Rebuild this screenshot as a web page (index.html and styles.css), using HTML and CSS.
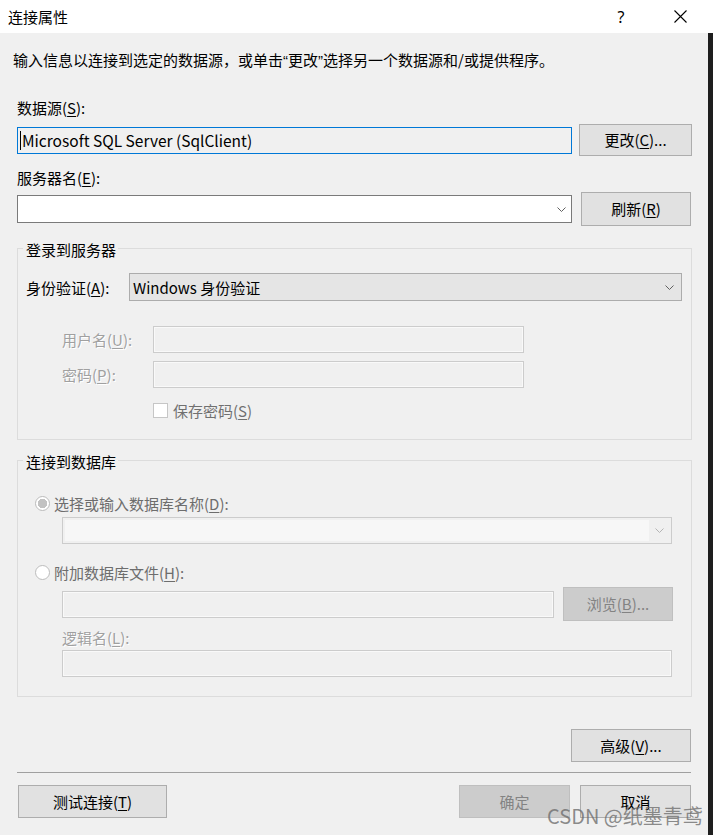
FILE: index.html
```html
<!DOCTYPE html>
<html lang="zh-CN">
<head>
    <meta charset="UTF-8">
    <title>连接属性</title>
    <link rel="stylesheet" href="styles.css">
</head>
<body>
<div class="titlebar">
    <span class="title">连接属性</span>
    <span class="help">?</span>
    <span class="close">
        <svg width="13" height="13" viewBox="0 0 13 13"><path d="M0.5 0.5 L12.5 12.5 M12.5 0.5 L0.5 12.5" stroke="#000" stroke-width="1.1" fill="none"/></svg>
    </span>
</div>
<div class="frame">
    <div class="content">
        <p class="intro">输入信息以连接到选定的数据源，或单击<span class="quote">“</span>更改<span class="quote">”</span>选择另一个数据源和/或提供程序。</p>

        <div class="label label-source">数据源(<u>S</u>):</div>
        <div class="row row-source">
            <div class="textbox focused"><span class="caret"></span><span class="latin">Microsoft SQL Server (SqlClient)</span></div>
            <button class="btn btn-change">更改(<u>C</u>)...</button>
        </div>

        <div class="label label-server">服务器名(<u>E</u>):</div>
        <div class="row row-server">
            <div class="combo combo-server">
                <svg class="chevron" width="9" height="5" viewBox="0 0 9 5"><path d="M0.5 0.5 L4.5 4.5 L8.5 0.5" stroke="#606060" fill="none"/></svg>
            </div>
            <button class="btn btn-refresh">刷新(<u>R</u>)</button>
        </div>

        <fieldset class="group group-login">
            <legend>登录到服务器</legend>
            <div class="row row-auth">
                <div class="auth-label">身份验证(<u>A</u>):</div>
                <div class="combo combo-auth">
                    <span>Windows 身份验证</span>
                    <svg class="chevron" width="9" height="5" viewBox="0 0 9 5"><path d="M0.5 0.5 L4.5 4.5 L8.5 0.5" stroke="#606060" fill="none"/></svg>
                </div>
            </div>
            <div class="row row-user">
                <div class="field-label dim">用户名(<u>U</u>):</div>
                <div class="textbox disabled input-short"></div>
            </div>
            <div class="row row-pwd">
                <div class="field-label dim">密码(<u>P</u>):</div>
                <div class="textbox disabled input-short"></div>
            </div>
            <div class="row row-check">
                <span class="checkbox"></span>
                <span class="check-label">保存密码(<u>S</u>)</span>
            </div>
        </fieldset>

        <fieldset class="group group-db">
            <legend>连接到数据库</legend>
            <div class="row row-radio first">
                <span class="radio checked"></span>
                <span class="radio-label">选择或输入数据库名称(<u>D</u>):</span>
            </div>
            <div class="combo combo-db">
                <span class="combo-db-inner"></span>
                <svg class="chevron" width="9" height="5" viewBox="0 0 9 5"><path d="M0.5 0.5 L4.5 4.5 L8.5 0.5" stroke="#b4b4b4" fill="none"/></svg>
            </div>
            <div class="row row-radio second">
                <span class="radio"></span>
                <span class="radio-label">附加数据库文件(<u>H</u>):</span>
            </div>
            <div class="row row-file">
                <div class="textbox disabled input-file"></div>
                <button class="btn btn-disabled btn-browse">浏览(<u>B</u>)...</button>
            </div>
            <div class="label dim label-logical">逻辑名(<u>L</u>):</div>
            <div class="textbox disabled input-logical"></div>
        </fieldset>

        <div class="row row-advanced">
            <button class="btn btn-advanced">高级(<u>V</u>)...</button>
        </div>
        <div class="separator"></div>
        <div class="row row-bottom">
            <button class="btn btn-test">测试连接(<u>T</u>)</button>
            <button class="btn btn-disabled btn-ok">确定</button>
            <button class="btn btn-cancel">取消</button>
        </div>
    </div>
    <div class="edge"></div>
</div>
<div class="watermark">CSDN @纸墨青鸢</div>
</body>
</html>
```

FILE: styles.css
```css
* {
    box-sizing: border-box;
}
body {
    margin: 0;
    width: 713px;
    height: 835px;
    overflow: hidden;
    position: relative;
    background-color: #f0f0f0;
    color: #000;
    font-family: "Noto Sans CJK SC", "Noto Sans", sans-serif;
    font-size: 15px;
}
u {
    text-decoration-thickness: 1px;
    text-underline-offset: 2px;
}

/* title bar */
.titlebar {
    height: 33px;
    background: #fff;
    display: flex;
    align-items: center;
}
.title {
    flex: 1;
    padding-left: 8px;
    line-height: 20px;
}
.help {
    width: 30px;
    margin-right: 29px;
    text-align: center;
    font-family: "Noto Sans", sans-serif;
    font-size: 16px;
}
.close {
    width: 30px;
    margin-right: 18px;
    display: flex;
    justify-content: center;
}

/* window body */
.frame {
    display: flex;
    height: 802px;
}
.content {
    width: 708px;
    padding: 0 16px 0 17px;
}
.edge {
    width: 5px;
    background: #1e1e1e;
}
.intro {
    margin: 17px 0 0 -4px;
    height: 20px;
    line-height: 20px;
}
.quote {
    font-family: "Liberation Sans", sans-serif;
    line-height: 1;
}
.latin {
    font-size: 15.5px;
}
.label {
    line-height: 20px;
}
.label-source {
    margin-top: 28px;
}
.label-server {
    margin-top: 12px;
}
.row {
    display: flex;
    align-items: center;
}
.row-source {
    margin-top: 6px;
    height: 32px;
}
.row-server {
    margin-top: 4px;
}

/* controls */
.textbox {
    height: 27px;
    border: 1px solid #cccccc;
    background: #f0f0f0;
}
.textbox.focused {
    width: 555px;
    border-color: #0078d7;
    display: flex;
    align-items: center;
    padding-left: 2px;
    line-height: 20px;
}
.caret {
    width: 1px;
    height: 19px;
    background: #000;
    margin-right: 1px;
}
.textbox.disabled {
    box-shadow: inset 0 0 0 1px #f9f9f9;
}
.combo {
    height: 28px;
    border: 1px solid #7a7a7a;
    background: #fff;
    display: flex;
    align-items: center;
    justify-content: flex-end;
}
.combo-server {
    width: 555px;
    padding-right: 5px;
}
.combo-auth {
    width: 553px;
    background: #e5e5e5;
    border-color: #acacac;
    justify-content: space-between;
    padding: 0 7px 0 3px;
}
.btn {
    font: inherit;
    color: #000;
    background: #e1e1e1;
    border: 1px solid #adadad;
    padding: 0;
    line-height: 20px;
}
.btn-disabled {
    background: #cccccc;
    border-color: #bfbfbf;
    color: #838383;
}
.btn-change {
    width: 113px;
    height: 32px;
    margin-left: 7px;
}
.btn-refresh {
    width: 110px;
    height: 34px;
    margin-left: 9px;
}

/* group boxes */
.group {
    min-width: 0;
    margin: 10px 0 0;
    padding: 0 9px 21px 8px;
    border: 1px solid #dcdcdc;
}
.group legend {
    margin-left: -3px;
    padding: 4px 2px 0 3px;
    line-height: 20px;
}
.row-auth {
    margin-top: 13px;
}
.auth-label {
    width: 103px;
}
.row-user {
    margin-top: 25px;
}
.row-pwd {
    margin-top: 8px;
}
.field-label {
    width: 127px;
    padding-left: 36px;
}
.dim {
    color: #a0a0a0;
    text-shadow: 1px 1px 0 #fff;
}
.input-short {
    width: 371px;
}
.row-check {
    margin-top: 15px;
    height: 15px;
}
.checkbox {
    width: 15px;
    height: 15px;
    margin-left: 127px;
    border: 1px solid #c6c6c6;
    background: #fff;
}
.check-label {
    margin-left: 5px;
    color: #707070;
    line-height: 20px;
}

.group-db {
    margin-top: 8px;
    padding-bottom: 19px;
}
.row-radio {
    height: 20px;
}
.row-radio.first {
    margin-top: 21px;
}
.row-radio.second {
    margin-top: 18px;
}
.radio {
    width: 15px;
    height: 15px;
    margin-left: 9px;
    border-radius: 50%;
    border: 1px solid #bcbcbc;
    background: #fff;
}
.radio.checked {
    background: radial-gradient(circle, #c2c2c2 0 4.5px, #fff 5px);
}
.radio-label {
    margin-left: 4px;
    color: #6d6d6d;
}
.combo-db {
    width: 610px;
    height: 27px;
    margin: 4px 0 0 36px;
    border-color: #cccccc;
    background: #f0f0f0;
    justify-content: space-between;
    padding: 2px 7px 2px 2px;
}
.combo-db-inner {
    width: 584px;
    height: 100%;
    background: #f7f7f7;
}
.row-file {
    margin-top: 5px;
}
.input-file {
    width: 492px;
    margin-left: 36px;
}
.btn-browse {
    width: 110px;
    height: 34px;
    margin-left: 9px;
}
.label-logical {
    margin-top: 7px;
    padding-left: 36px;
}
.input-logical {
    width: 610px;
    margin: 2px 0 0 36px;
}

/* bottom */
.row-advanced {
    margin-top: 32px;
    justify-content: flex-end;
}
.btn-advanced {
    width: 120px;
    height: 33px;
    margin-right: 1px;
}
.separator {
    margin: 10px 1px 0 0;
    height: 1px;
    background: #a0a0a0;
}
.row-bottom {
    margin-top: 12px;
}
.btn-test {
    width: 149px;
    height: 33px;
    margin-left: 1px;
}
.btn-ok {
    width: 111px;
    height: 33px;
    margin-left: auto;
}
.btn-cancel {
    width: 111px;
    height: 33px;
    margin: 0 1px 0 10px;
}
.watermark {
    position: absolute;
    left: 547px;
    top: 804px;
    font-size: 20px;
    line-height: 24px;
    color: rgba(105, 105, 105, 0.75);
    white-space: nowrap;
}
```
